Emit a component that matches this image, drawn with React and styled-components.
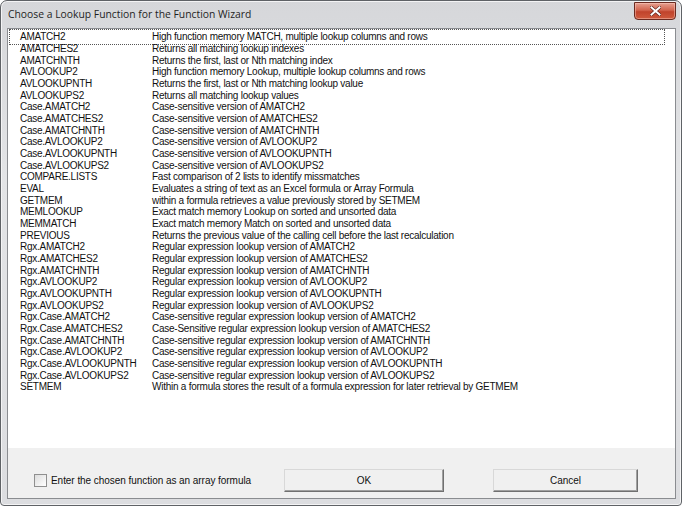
import React from 'react';
import styled, { createGlobalStyle } from 'styled-components';

const Global = createGlobalStyle`
  html, body {
    margin: 0;
    padding: 0;
    background: #ffffff;
  }
  body {
    font-family: "Liberation Sans", Arial, sans-serif;
  }
`;

const Window = styled.div`
  width: 682px;
  height: 506px;
  box-sizing: border-box;
  border: 1px solid #5f6266;
  border-radius: 7px 7px 4px 4px;
  background: linear-gradient(180deg, #d6d7da 0%, #e3e4e6 35%, #dcdde0 100%);
  display: flex;
  flex-direction: column;
  padding: 0 5px 6px 6px;
  box-shadow: inset 0 0 0 1px #f4f4f5;
`;

const TitleBar = styled.div`
  height: 27px;
  display: flex;
  align-items: flex-start;
  justify-content: space-between;
  padding-left: 1px;
`;

const Title = styled.span`
  font-family: "Open Sans", "Noto Sans", sans-serif;
  font-size: 10.35px;
  color: #1e1e1e;
  margin-top: 6px;
`;

const CloseButton = styled.div`
  width: 42px;
  height: 18px;
  margin-top: 1px;
  box-sizing: border-box;
  border: 1px solid #6b2a20;
  border-radius: 0 0 4px 4px;
  background: linear-gradient(180deg, #e6a090 0%, #d2644e 45%, #c0432c 55%, #cf5a3e 100%);
  display: flex;
  align-items: center;
  justify-content: center;
  box-shadow: inset 0 0 0 1px rgba(255, 210, 200, 0.45);
`;

const Client = styled.div`
  flex: 1;
  display: flex;
  flex-direction: column;
  border: 1px solid #8a8c90;
  background: #f0f0f0;
  min-height: 0;
`;

const List = styled.div`
  flex: 1;
  background: #ffffff;
  padding: 2px 12px 0 3px;
  display: flex;
  flex-direction: column;
`;

const Row = styled.div`
  display: grid;
  grid-template-columns: 132px 1fr;
  height: ${(p) => p.$h}px;
  line-height: ${(p) => p.$h}px;
  flex: none;
  box-sizing: border-box;
  padding-left: 9px;
  font-size: 10px;
  letter-spacing: -0.25px;
  color: #111111;
  outline: ${(p) => (p.$focused ? '1px dotted #555' : 'none')};
  outline-offset: ${(p) => (p.$focused ? '1px' : '0')};
  white-space: nowrap;
`;

const Footer = styled.div`
  height: 50px;
  box-sizing: border-box;
  padding: 14px 0 0 26px;
  display: flex;
  align-items: center;
`;

const FooterInner = styled.div`
  display: flex;
  align-items: center;
  height: 23px;
`;

const CheckLabel = styled.label`
  display: flex;
  align-items: center;
  gap: 4px;
  width: 250px;
  font-size: 10px;
  letter-spacing: -0.05px;
  color: #111111;
`;

const CheckBox = styled.span`
  width: 11px;
  height: 11px;
  border: 1px solid #8f8f8f;
  background: linear-gradient(135deg, #dcdcdc, #ffffff);
`;

const Button = styled.div`
  width: ${(p) => p.$w}px;
  height: 23px;
  margin-left: ${(p) => p.$ml}px;
  box-sizing: border-box;
  border: 1px solid #707070;
  border-top-color: #d8d8d8;
  border-left-color: #d8d8d8;
  background: #f0f0f0;
  box-shadow: inset -1px -1px 0 #a0a0a0;
  display: flex;
  align-items: center;
  justify-content: center;
  font-size: 10px;
  color: #111111;
`;

const rows = [
  ['AMATCH2', 'High function memory MATCH, multiple lookup columns and rows'],
  ['AMATCHES2', 'Returns all matching lookup indexes'],
  ['AMATCHNTH', 'Returns the first, last or Nth matching index'],
  ['AVLOOKUP2', 'High function memory Lookup, multiple lookup columns and rows'],
  ['AVLOOKUPNTH', 'Returns the first, last or Nth matching lookup value'],
  ['AVLOOKUPS2', 'Returns all matching lookup values'],
  ['Case.AMATCH2', 'Case-sensitive version of AMATCH2'],
  ['Case.AMATCHES2', 'Case-sensitive version of AMATCHES2'],
  ['Case.AMATCHNTH', 'Case-sensitive version of AMATCHNTH'],
  ['Case.AVLOOKUP2', 'Case-sensitive version of AVLOOKUP2'],
  ['Case.AVLOOKUPNTH', 'Case-sensitive version of AVLOOKUPNTH'],
  ['Case.AVLOOKUPS2', 'Case-sensitive version of AVLOOKUPS2'],
  ['COMPARE.LISTS', 'Fast comparison of 2 lists to identify missmatches'],
  ['EVAL', 'Evaluates a string of text as an Excel formula or Array Formula'],
  ['GETMEM', 'within a formula retrieves a value previously stored by SETMEM'],
  ['MEMLOOKUP', 'Exact match memory Lookup on sorted and unsorted data'],
  ['MEMMATCH', 'Exact match memory Match on sorted and unsorted data'],
  ['PREVIOUS', 'Returns the previous value of the calling cell before the last recalculation'],
  ['Rgx.AMATCH2', 'Regular expression lookup version of AMATCH2'],
  ['Rgx.AMATCHES2', 'Regular expression lookup version of AMATCHES2'],
  ['Rgx.AMATCHNTH', 'Regular expression lookup version of AMATCHNTH'],
  ['Rgx.AVLOOKUP2', 'Regular expression lookup version of AVLOOKUP2'],
  ['Rgx.AVLOOKUPNTH', 'Regular expression lookup version of AVLOOKUPNTH'],
  ['Rgx.AVLOOKUPS2', 'Regular expression lookup version of AVLOOKUPS2'],
  ['Rgx.Case.AMATCH2', 'Case-sensitive regular expression lookup version of AMATCH2'],
  ['Rgx.Case.AMATCHES2', 'Case-Sensitive regular expression lookup version of AMATCHES2'],
  ['Rgx.Case.AMATCHNTH', 'Case-sensitive regular expression lookup version of AMATCHNTH'],
  ['Rgx.Case.AVLOOKUP2', 'Case-sensitive regular expression lookup version of AVLOOKUP2'],
  ['Rgx.Case.AVLOOKUPNTH', 'Case-sensitive regular expression lookup version of AVLOOKUPNTH'],
  ['Rgx.Case.AVLOOKUPS2', 'Case-sensitive regular expression lookup version of AVLOOKUPS2'],
  ['SETMEM', 'Within a formula stores the result of a formula expression for later retrieval by GETMEM'],
];

// the screenshot is scaled, rows average ~11.6px; alternate 12/12/11 to stay on whole pixels
const rowHeight = (i) => (i % 3 === 2 ? 11 : 12);

const App = () => (
  <>
    <Global />
    <Window>
      <TitleBar>
        <Title>Choose a Lookup Function for the Function Wizard</Title>
        <CloseButton>
          <svg width="11" height="10" viewBox="0 0 11 10">
            <path d="M1.5 1.5 L9.5 8.5 M9.5 1.5 L1.5 8.5" stroke="#5a2018" strokeWidth="3.2" strokeLinecap="square" />
            <path d="M1.5 1.5 L9.5 8.5 M9.5 1.5 L1.5 8.5" stroke="#ffffff" strokeWidth="2" strokeLinecap="square" />
          </svg>
        </CloseButton>
      </TitleBar>
      <Client>
        <List>
          {rows.map(([name, desc], i) => (
            <Row key={name} $h={rowHeight(i)} $focused={i === 0}>
              <span>{name}</span>
              <span>{desc}</span>
            </Row>
          ))}
        </List>
        <Footer>
          <FooterInner>
            <CheckLabel>
              <CheckBox />
              Enter the chosen function as an array formula
            </CheckLabel>
            <Button $w={160} $ml={0}>OK</Button>
            <Button $w={145} $ml={49}>Cancel</Button>
          </FooterInner>
        </Footer>
      </Client>
    </Window>
  </>
);

export default App;
